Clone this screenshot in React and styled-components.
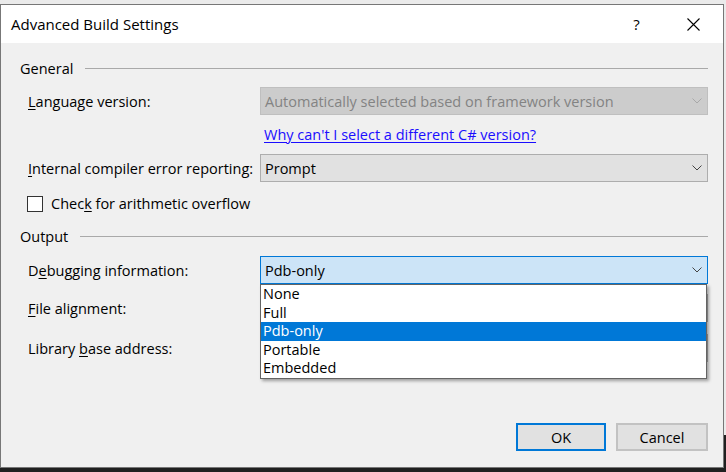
import React from "react";
import styled, { createGlobalStyle } from "styled-components";

const GlobalStyle = createGlobalStyle`
  html, body {
    margin: 0;
    padding: 0;
  }
  body {
    width: 726px;
    height: 472px;
    overflow: hidden;
    font-family: "Open Sans", "Noto Sans", sans-serif;
    color: #000;
  }
`;

// Page behind the dialog
const Page = styled.div`
  width: 726px;
  height: 472px;
  box-sizing: border-box;
  padding-top: 4px;
  background: linear-gradient(to bottom, #ebebeb 0, #ebebeb 435px, #202020 435px);
`;

const Dialog = styled.div`
  width: 724px;
  height: 464px;
  box-sizing: border-box;
  border: 1px solid #777;
  background: #f0f0f0;
  display: flex;
  flex-direction: column;
`;

const TitleBar = styled.div`
  height: 38px;
  flex: none;
  background: #fff;
  display: flex;
  align-items: center;
  padding: 0 1px 0 10px;
`;

const TitleText = styled.div`
  flex: 1;
  font-size: 15px;
`;

const CaptionButton = styled.div`
  width: 57px;
  height: 38px;
  display: flex;
  align-items: center;
  justify-content: center;
  font-size: 15px;
`;

const Body = styled.div`
  flex: 1;
  display: flex;
  flex-direction: column;
  padding: 15px 15px 16px 19px;
  font-size: 14.5px;
`;

const GroupHeader = styled.div`
  height: 20px;
  display: flex;
  align-items: center;
  gap: 12px;
  margin-top: ${(p) => p.$gap || 0}px;

  &::after {
    content: "";
    flex: 1;
    height: 1px;
    background: #a9a9a9;
  }
`;

const FieldRow = styled.div`
  display: grid;
  grid-template-columns: 232px 1fr;
  align-items: center;
  padding-left: 8px;
  margin-top: ${(p) => p.$gap || 0}px;
  min-height: ${(p) => p.$h || 28}px;
`;

const Label = styled.span``;

const Mn = styled.u`
  text-decoration-thickness: 1px;
  text-underline-offset: 2px;
`;

const ControlCell = styled.div`
  position: relative;
`;

const comboColors = {
  disabled: { bg: "#cccccc", border: "#bfbfbf", text: "#838383", chevron: "#a8a8a8" },
  normal: { bg: "#e1e1e1", border: "#adadad", text: "#000", chevron: "#444" },
  focused: { bg: "#cce4f7", border: "#0078d7", text: "#000", chevron: "#444" },
};

const Combo = styled.div`
  height: 28px;
  box-sizing: border-box;
  display: flex;
  align-items: center;
  justify-content: space-between;
  padding: 0 5px 0 4px;
  background: ${(p) => comboColors[p.$variant].bg};
  border: 1px solid ${(p) => comboColors[p.$variant].border};
  color: ${(p) => comboColors[p.$variant].text};
`;

const Chevron = ({ color }) => (
  <svg width="10" height="6" viewBox="0 0 10 6">
    <path d="M0.5 0.5 L5 5 L9.5 0.5" fill="none" stroke={color} strokeWidth="1" />
  </svg>
);

const LinkText = styled.a`
  color: #1a0dff;
  text-decoration: underline;
  text-decoration-thickness: 1px;
  text-underline-offset: 2px;
  padding-left: 4px;
  cursor: pointer;
`;

const CheckRow = styled.label`
  display: flex;
  align-items: center;
  gap: 8px;
  height: 23px;
  padding-left: 7px;
  margin-top: ${(p) => p.$gap || 0}px;
`;

const CheckBox = styled.span`
  width: 16px;
  height: 16px;
  box-sizing: border-box;
  border: 1px solid #333;
  background: #fff;
`;

const DropList = styled.ul`
  position: absolute;
  top: 100%;
  left: 0;
  right: 1px;
  margin: 0;
  padding: 0;
  list-style: none;
  background: #fff;
  border: 1px solid #646464;
  box-shadow: 2px 2px 3px rgba(0, 0, 0, 0.35);
  z-index: 10;
`;

const DropItem = styled.li`
  height: 18.6px;
  line-height: 18.6px;
  padding-left: 2px;
  background: ${(p) => (p.$selected ? "#0078d7" : "transparent")};
  color: ${(p) => (p.$selected ? "#fff" : "#000")};
`;

const Footer = styled.div`
  margin-top: auto;
  display: flex;
  justify-content: flex-end;
  gap: 10px;
`;

const Button = styled.button`
  width: ${(p) => p.$w}px;
  height: 28px;
  box-sizing: border-box;
  background: #e1e1e1;
  border: 2px solid ${(p) => (p.$default ? "#0078d7" : "#c2c2c2")};
  font-family: inherit;
  font-size: 14.5px;
  color: #000;
  padding: 0;
`;

const debugOptions = ["None", "Full", "Pdb-only", "Portable", "Embedded"];

function App() {
  return (
    <Page>
      <GlobalStyle />
      <Dialog>
        <TitleBar>
          <TitleText>Advanced Build Settings</TitleText>
          <CaptionButton>?</CaptionButton>
          <CaptionButton>
            <svg width="13" height="13" viewBox="0 0 13 13">
              <path d="M0.5 0.5 L12.5 12.5 M12.5 0.5 L0.5 12.5" stroke="#000" strokeWidth="1.1" />
            </svg>
          </CaptionButton>
        </TitleBar>

        <Body>
          <GroupHeader>General</GroupHeader>

          <FieldRow $gap={9}>
            <Label>
              <Mn>L</Mn>anguage version:
            </Label>
            <Combo $variant="disabled">
              <span>Automatically selected based on framework version</span>
              <Chevron color={comboColors.disabled.chevron} />
            </Combo>
          </FieldRow>

          <FieldRow $gap={9} $h={20}>
            <span />
            <div>
              <LinkText>Why can't I select a different C# version?</LinkText>
            </div>
          </FieldRow>

          <FieldRow $gap={10}>
            <Label>
              <Mn>I</Mn>nternal compiler error reporting:
            </Label>
            <Combo $variant="normal">
              <span>Prompt</span>
              <Chevron color={comboColors.normal.chevron} />
            </Combo>
          </FieldRow>

          <CheckRow $gap={10}>
            <CheckBox />
            <span>
              Chec<Mn>k</Mn> for arithmetic overflow
            </span>
          </CheckRow>

          <GroupHeader $gap={11}>Output</GroupHeader>

          <FieldRow $gap={10}>
            <Label>
              D<Mn>e</Mn>bugging information:
            </Label>
            <ControlCell>
              <Combo $variant="focused">
                <span>Pdb-only</span>
                <Chevron color={comboColors.focused.chevron} />
              </Combo>
              <DropList>
                {debugOptions.map((o) => (
                  <DropItem key={o} $selected={o === "Pdb-only"}>
                    {o}
                  </DropItem>
                ))}
              </DropList>
            </ControlCell>
          </FieldRow>

          {/* these two combos sit under the open list */}
          <FieldRow $gap={10}>
            <Label>
              <Mn>F</Mn>ile alignment:
            </Label>
            <Combo $variant="normal" />
          </FieldRow>

          <FieldRow $gap={12}>
            <Label>
              Library <Mn>b</Mn>ase address:
            </Label>
            <Combo $variant="normal" />
          </FieldRow>

          <Footer>
            <Button $w={90} $default>
              OK
            </Button>
            <Button $w={92}>Cancel</Button>
          </Footer>
        </Body>
      </Dialog>
    </Page>
  );
}

export default App;
